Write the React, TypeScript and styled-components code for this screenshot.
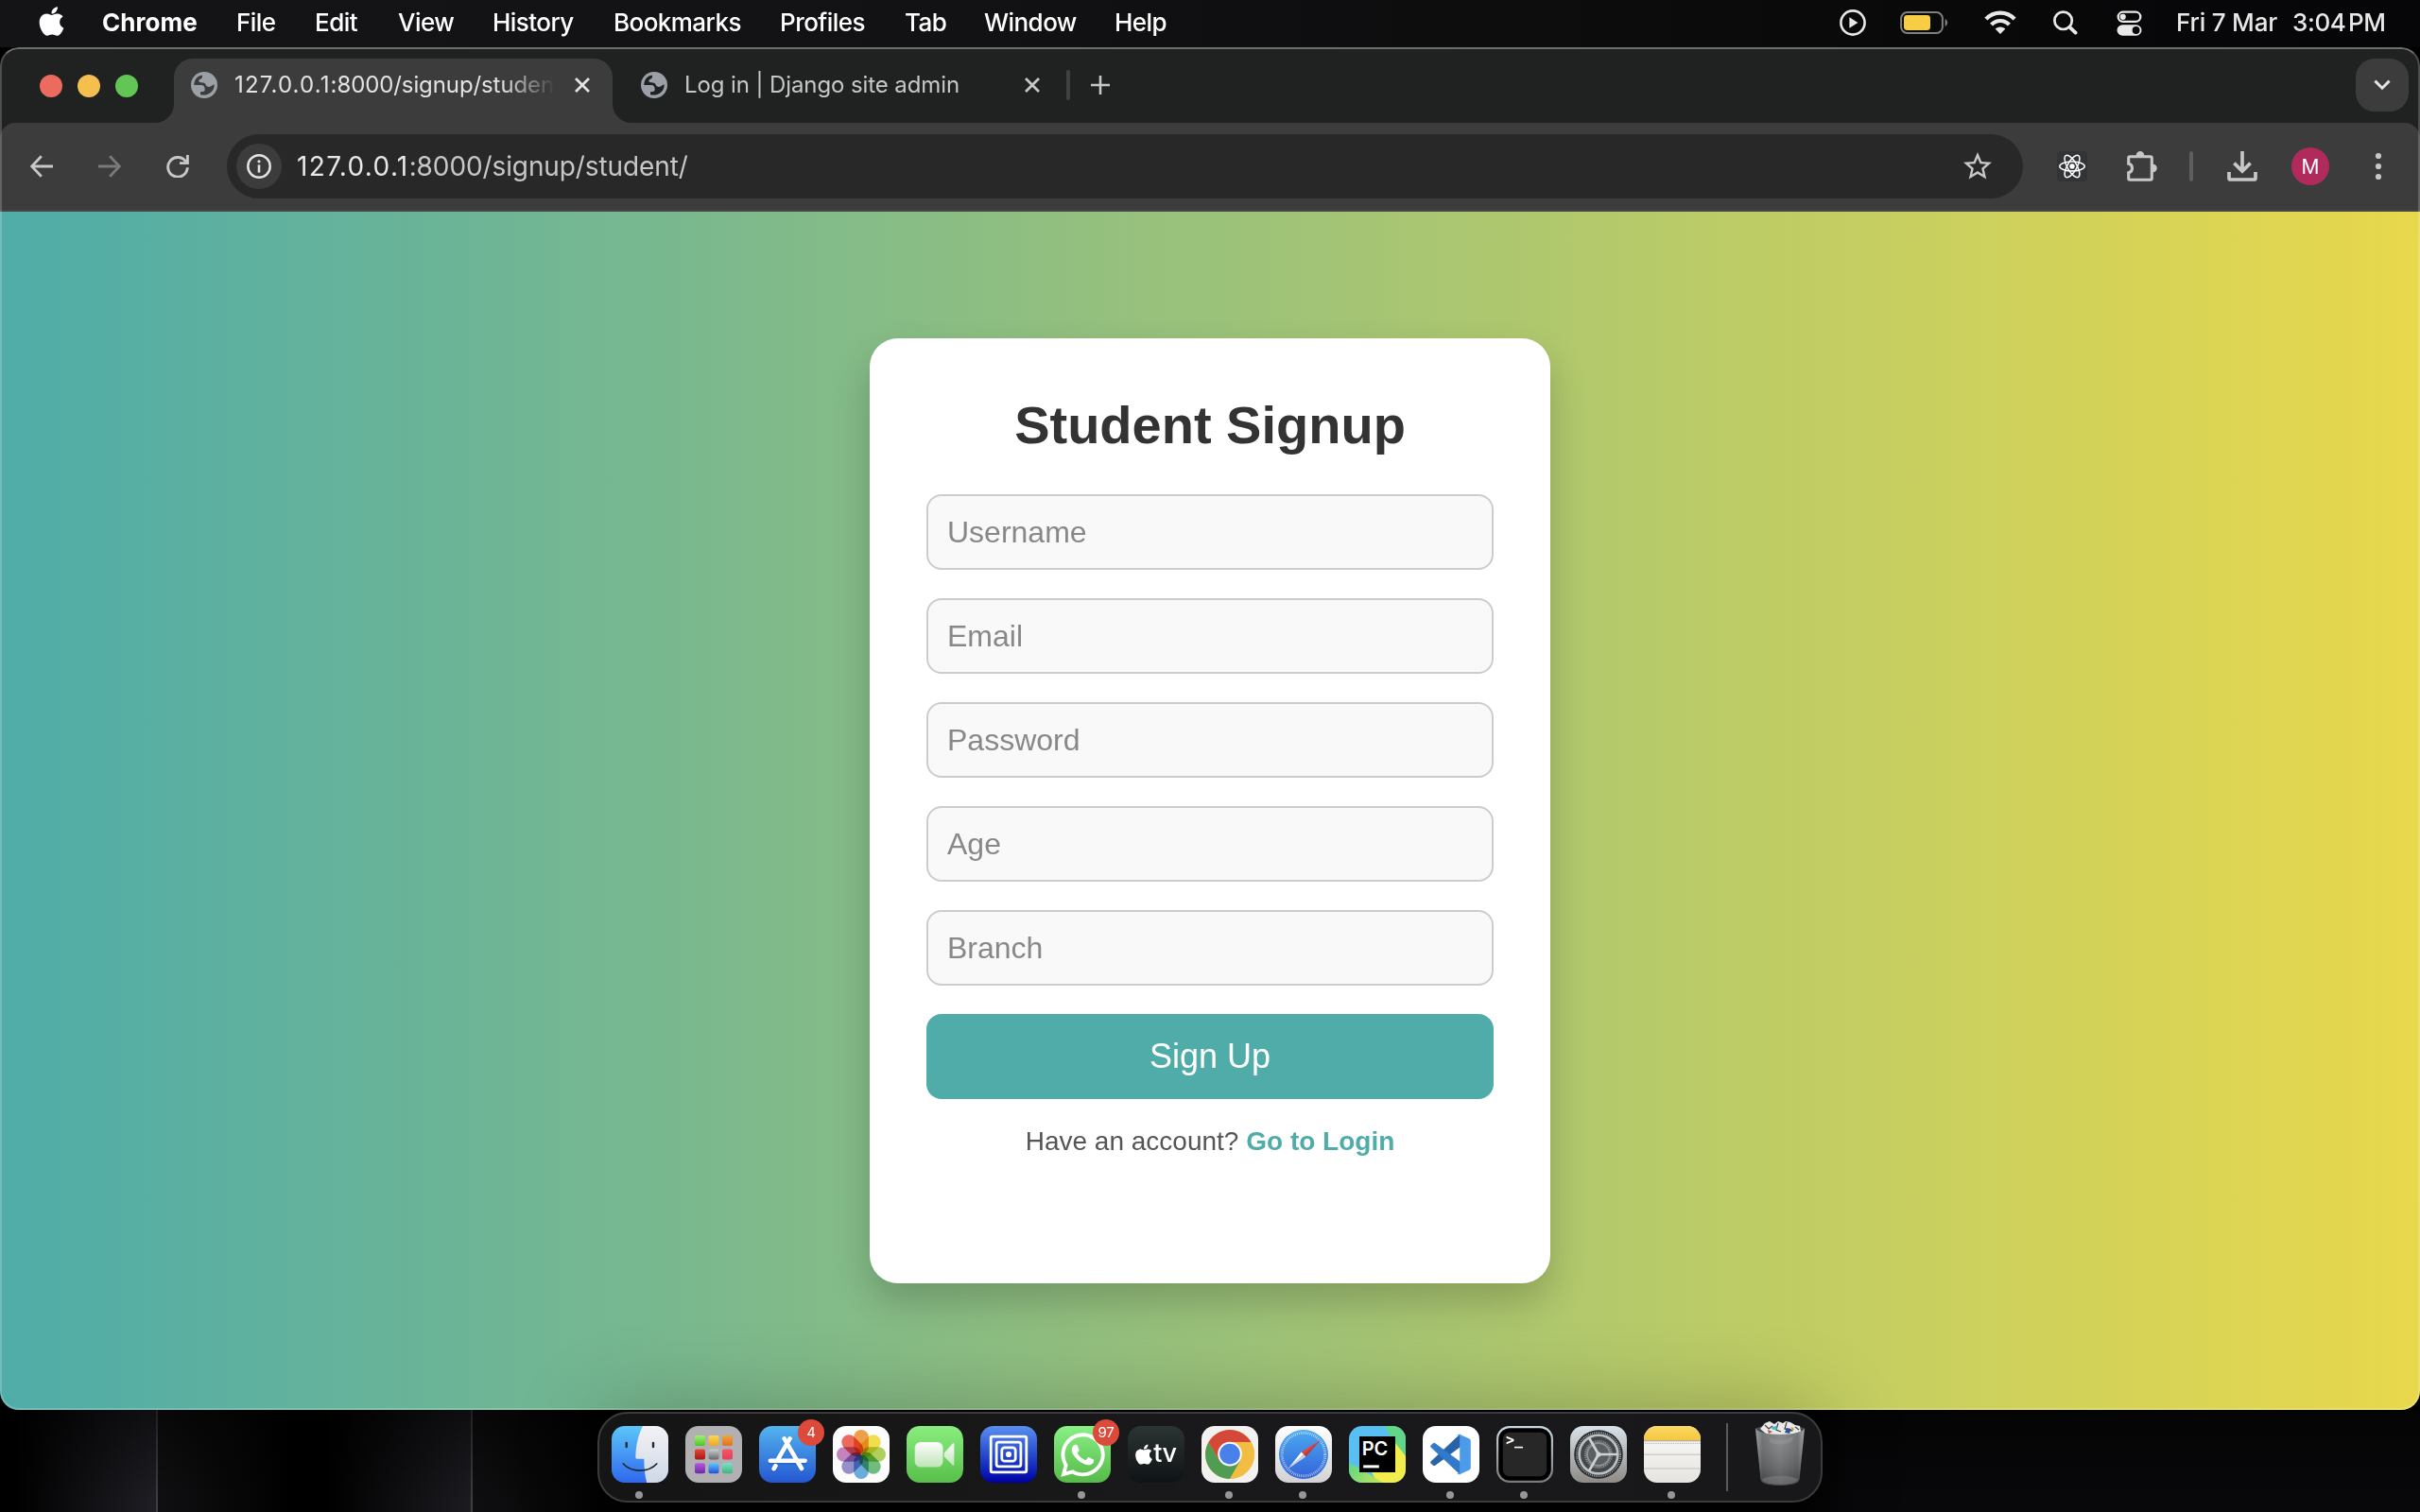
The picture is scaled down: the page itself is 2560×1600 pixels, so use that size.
import React from 'react';
import styled, { createGlobalStyle, css } from 'styled-components';
import { FaApple, FaWhatsapp } from 'react-icons/fa';
import { MdStarBorder } from 'react-icons/md';

const UI_FONT = "Inter, 'Noto Sans', sans-serif";
const PAGE_FONT = "'Liberation Sans', Arial, sans-serif";

const GlobalStyle = createGlobalStyle`
  html, body { margin: 0; padding: 0; background: #000; overflow: hidden; }
  *, *::before, *::after { box-sizing: border-box; }
  svg { display: block; flex: none; }
`;

const Desktop = styled.div`
  width: 2560px;
  height: 1600px;
  display: flex;
  flex-direction: column;
  background: #000;
  font-family: ${UI_FONT};
  overflow: hidden;
`;

/* ---------- menu bar ---------- */

const MenuBar = styled.header`
  height: 50px;
  padding: 0 39px 2px 37px;
  display: flex;
  align-items: center;
  color: #fff;
  background: linear-gradient(90deg, #141417 0, #121214 1000px, #0a0a0b 1900px, #060608 100%);
`;

const MenuLogo = styled.span`
  display: flex;
  width: 71px;
  padding-bottom: 3px;
  color: #fff;
`;

const MenuItem = styled.span<{ $w: number; $bold?: boolean }>`
  width: ${(p) => p.$w}px;
  padding-bottom: 1px;
  font-size: 26px;
  line-height: 46px;
  font-weight: ${(p) => (p.$bold ? 700 : 500)};
  letter-spacing: ${(p) => (p.$bold ? '0.05px' : '-0.55px')};
  white-space: nowrap;
`;

const StatusArea = styled.div`
  margin-left: auto;
  display: flex;
  align-items: center;
  color: #e8e8e8;
`;

const StatusSlot = styled.span<{ $gap: number }>`
  display: flex;
  margin-right: ${(p) => p.$gap}px;
`;

const Clock = styled.span<{ $w: number; $tight?: boolean }>`
  width: ${(p) => p.$w}px;
  padding-bottom: 1px;
  font-size: 26px;
  line-height: 46px;
  font-weight: 500;
  letter-spacing: ${(p) => (p.$tight ? '-0.4px' : '-0.2px')};
  word-spacing: ${(p) => (p.$tight ? '-4px' : '0')};
  white-space: nowrap;
`;

/* ---------- browser window ---------- */

const Window = styled.section`
  position: relative;
  height: 1442px;
  display: flex;
  flex-direction: column;
  border-radius: 20px;
  overflow: hidden;
  background: #202221;
  &::after {
    content: '';
    position: absolute;
    inset: 0;
    border: 2px solid rgba(255, 255, 255, 0.2);
    border-top-color: rgba(255, 255, 255, 0.34);
    border-radius: 20px;
    pointer-events: none;
  }
`;

const TabStrip = styled.div`
  height: 80px;
  padding: 12px 12px 0 42px;
  display: flex;
`;

const Lights = styled.div`
  display: flex;
  gap: 16px;
  width: 142px;
  padding-top: 17px;
`;

const Light = styled.span<{ $color: string }>`
  width: 24px;
  height: 24px;
  border-radius: 50%;
  background: ${(p) => p.$color};
`;

const flare = css`
  content: '';
  position: absolute;
  bottom: 0;
  width: 20px;
  height: 20px;
`;

const Tab = styled.div<{ $active?: boolean; $w: number }>`
  position: relative;
  width: ${(p) => p.$w}px;
  height: 68px;
  padding: 0 ${(p) => (p.$active ? 24 : 8)}px 12px ${(p) => (p.$active ? 18 : 30)}px;
  display: flex;
  align-items: center;
  color: ${(p) => (p.$active ? '#e3e3e3' : '#c7c7c7')};
  ${(p) =>
    p.$active &&
    css`
      background: #3c3c3c;
      border-radius: 20px 20px 0 0;
      &::before {
        ${flare}
        left: -20px;
        background: radial-gradient(circle at 0 0, transparent 19.5px, #3c3c3c 20.5px);
      }
      &::after {
        ${flare}
        right: -20px;
        background: radial-gradient(circle at 100% 0, transparent 19.5px, #3c3c3c 20.5px);
      }
    `}
`;

const TabTitle = styled.span<{ $w: number; $fade?: boolean }>`
  width: ${(p) => p.$w}px;
  margin-left: 18px;
  font-size: 24px;
  line-height: 40px;
  letter-spacing: -0.1px;
  white-space: nowrap;
  overflow: hidden;
  b {
    font-weight: 400;
    letter-spacing: 1.15px;
  }
  ${(p) =>
    p.$fade &&
    css`
      mask-image: linear-gradient(90deg, #000 282px, transparent 340px);
    `}
`;

const TabClose = styled.span`
  display: flex;
  margin-left: auto;
`;

const TabDivider = styled.span`
  width: 4px;
  height: 32px;
  margin: 12px 22px 0 20px;
  border-radius: 2px;
  background: #3f4140;
`;

const NewTab = styled.span`
  display: flex;
  padding-top: 18px;
`;

const TabSearch = styled.span`
  margin-left: auto;
  width: 56px;
  height: 56px;
  border-radius: 20px;
  background: #3c3c3c;
  color: #e3e3e3;
  display: flex;
  align-items: center;
  justify-content: center;
`;

const Toolbar = styled.div`
  height: 94px;
  padding: 0 36px 0 32px;
  display: flex;
  align-items: center;
  background: #3c3c3c;
  border-bottom: 2px solid #474747;
  border-radius: 16px 16px 0 0;
  color: #c7c7c7;
`;

const NavButton = styled.span<{ $gap: number; $dim?: boolean }>`
  display: flex;
  margin-right: ${(p) => p.$gap}px;
  color: ${(p) => (p.$dim ? '#7a7a7a' : '#c7c7c7')};
`;

const Omnibox = styled.div`
  width: 1900px;
  height: 68px;
  padding: 0 30px 0 10px;
  display: flex;
  align-items: center;
  border-radius: 34px;
  background: #282828;
`;

const SiteInfo = styled.span`
  width: 48px;
  height: 48px;
  border-radius: 50%;
  background: #3c3c3c;
  color: #e3e3e3;
  display: flex;
  align-items: center;
  justify-content: center;
`;

const Url = styled.span`
  margin-left: 16px;
  font-size: 28px;
  line-height: 40px;
  letter-spacing: -0.1px;
  color: #c7c7c7;
  white-space: nowrap;
  b {
    font-weight: 400;
    letter-spacing: 1.35px;
    color: #e8e8e8;
  }
`;

const StarSlot = styled.span`
  display: flex;
  margin-left: auto;
`;

const ToolSlot = styled.span<{ $left: number }>`
  display: flex;
  margin-left: ${(p) => p.$left}px;
`;

const ReactBox = styled.span`
  margin-left: 36px;
  width: 32px;
  height: 32px;
  border-radius: 4px;
  background: #333435;
  display: flex;
  align-items: center;
  justify-content: center;
`;

const ToolDivider = styled.span`
  width: 4px;
  height: 32px;
  margin-left: 34px;
  border-radius: 2px;
  background: #5e5e5e;
`;

const Avatar = styled.span`
  width: 40px;
  height: 40px;
  margin-left: 36px;
  border-radius: 50%;
  background: #b02b5c;
  color: #fff;
  font-size: 21px;
  line-height: 41px;
  text-align: center;
`;

/* ---------- signup page ---------- */

const Page = styled.main`
  flex: 1;
  display: flex;
  align-items: center;
  justify-content: center;
  background: linear-gradient(90deg, #4faca8 0%, #9bc27a 50%, #e8d84c 100%);
  font-family: ${PAGE_FONT};
`;

const Card = styled.form`
  width: 720px;
  height: 1000px;
  padding: 59px 60px 60px;
  display: flex;
  flex-direction: column;
  border-radius: 30px;
  background: #fff;
  box-shadow: 0 20px 40px rgba(0, 0, 0, 0.2);
`;

const Title = styled.h2`
  margin: 0 0 41px;
  height: 65px;
  font-size: 56px;
  line-height: 65px;
  font-weight: 700;
  color: #333;
  text-align: center;
`;

const Field = styled.input`
  width: 600px;
  height: 80px;
  margin: 0 0 30px;
  padding: 0 20px;
  border: 2px solid #ccc;
  border-radius: 16px;
  background: #f9f9f9;
  font: 32px ${PAGE_FONT};
  outline: none;
  &::placeholder {
    color: #888;
    opacity: 1;
  }
`;

const Submit = styled.button`
  height: 90px;
  padding: 0;
  border: 0;
  border-radius: 16px;
  background: #4faca8;
  color: #fff;
  font: 36px ${PAGE_FONT};
`;

const LoginHint = styled.p`
  margin: 29px 0 0;
  font-size: 28px;
  line-height: 32px;
  color: #555;
  text-align: center;
  b {
    color: #4faca8;
  }
`;

/* ---------- dock ---------- */

const DockArea = styled.footer`
  height: 108px;
  padding-top: 2px;
  display: flex;
  justify-content: center;
  align-items: flex-start;
  background:
    linear-gradient(180deg, rgba(0, 0, 0, 0.5), transparent 90%),
    linear-gradient(90deg, #000 15px, #1f1e24 165px, #3e3d43 165px, #3e3d43 167px, #101012 167px, #000 310px, #000 345px, #1c1b20 498px, #3e3d43 498px, #3e3d43 500px, #0f0f11 500px, #020202 640px, #020202 1900px, #08080a 1960px, #08080a 100%);
`;

const Dock = styled.nav`
  position: relative;
  width: 1296px;
  height: 96px;
  padding: 13px 13px 0;
  display: flex;
  gap: 18px;
  border: 2px solid #3b3b3d;
  border-radius: 32px;
  background: linear-gradient(90deg, #151515, #19191b 50%, #18181a);
  box-shadow: 0 0 90px rgba(0, 0, 0, 0.26);
`;

const DockItem = styled.div`
  position: relative;
  width: 60px;
  display: flex;
  flex-direction: column;
  align-items: center;
`;

const Tile = styled.div<{ $bg: string }>`
  width: 60px;
  height: 60px;
  border-radius: 14px;
  overflow: hidden;
  background: ${(p) => p.$bg};
`;

const RunningDot = styled.span`
  width: 8px;
  height: 8px;
  margin: 9px 2px 0 0;
  border-radius: 50%;
  background: #96969a;
`;

const Badge = styled.span`
  position: absolute;
  left: 41px;
  top: -7px;
  width: 28px;
  height: 28px;
  border-radius: 50%;
  background: #db4a3a;
  color: #fff;
  font-size: 15px;
  line-height: 28px;
  letter-spacing: -0.3px;
  text-align: center;
`;

const DockDivider = styled.span`
  width: 2px;
  height: 72px;
  margin: -3px 7px 0 9px;
  background: #5a5a5c;
`;

/* ---------- small icons ---------- */

const Globe = ({ hole }: { hole: string }) => (
  <svg width="28" height="28" viewBox="0 0 28 28">
    <circle cx="14" cy="14" r="14" fill="#9aa0a6" />
    <path
      fill={hole}
      d="M3.3 14C3.3 8 7 4 12 3.4V5.2C12 8 8 7.3 8.3 9.8 8.6 11.8 12 11 14 11.8 16 12.6 15.5 15.6 18.5 15.9 21 16 22 14.2 24.7 13.2 25 20.5 18.5 26 10 24.3V21.2C12 21 14.7 21.5 14.7 18.5 14.7 15.5 13.5 14 11 14Z"
    />
  </svg>
);

const Cross = () => (
  <svg width="16" height="16" viewBox="0 0 16 16" stroke="currentColor" strokeWidth="2.8">
    <path d="M1 1 15 15M15 1 1 15" />
  </svg>
);

const PlayIcon = () => (
  <svg width="28" height="28" viewBox="0 0 28 28">
    <circle cx="14" cy="14" r="12.6" fill="none" stroke="currentColor" strokeWidth="2.6" />
    <path d="M10.4 8.3V19.7L19.4 14Z" fill="currentColor" />
  </svg>
);

const BatteryIcon = () => (
  <svg width="52" height="24" viewBox="0 0 52 24">
    <rect x="1.1" y="1.1" width="43.8" height="21.8" rx="6.5" fill="none" stroke="#7f7f80" strokeWidth="2" />
    <rect x="4" y="4" width="28" height="16" rx="3.4" fill="#f7cd46" />
    <path d="M47.6 8v8c3.4-1.4 3.4-6.6 0-8Z" fill="#7f7f80" />
  </svg>
);

const WifiIcon = () => (
  <svg width="34" height="26" viewBox="0 0 34 26">
    <g fill="none" stroke="currentColor" strokeWidth="4.2">
      <path d="M1.9 9.2A20.5 20.5 0 0 1 32.1 9.2" />
      <path d="M7.6 15.2A12.6 12.6 0 0 1 26.4 15.2" />
    </g>
    <path d="M17 25 11.6 19.6Q17 15.4 22.4 19.6Z" fill="currentColor" />
  </svg>
);

const SearchIcon = () => (
  <svg width="26" height="26" viewBox="0 0 26 26" fill="none" stroke="currentColor" strokeLinecap="round">
    <circle cx="10.6" cy="10.8" r="9.2" strokeWidth="2.7" />
    <path d="M17.5 17.8 23.6 23.6" strokeWidth="3.8" />
  </svg>
);

const ControlIcon = () => (
  <svg width="27" height="27" viewBox="0 0 27 27">
    <rect x="1.7" y="1.7" width="23.6" height="10.2" rx="5.1" fill="none" stroke="currentColor" strokeWidth="2.3" />
    <circle cx="6.7" cy="6.8" r="3.1" fill="currentColor" />
    <rect x="0.5" y="15.2" width="26" height="11.6" rx="5.8" fill="currentColor" />
    <circle cx="20.6" cy="21" r="3.9" fill="#08080a" />
  </svg>
);

const BackIcon = ({ flip }: { flip?: boolean }) => (
  <svg width="24" height="24" viewBox="0 0 24 24" fill="none" stroke="currentColor" strokeWidth="2.8">
    <path d={flip ? 'M0 12H22M12.2 1.2 22.4 12 12.2 22.8' : 'M24 12H2M11.8 1.2 1.6 12 11.8 22.8'} />
  </svg>
);

const ReloadIcon = () => (
  <svg width="24" height="24" viewBox="0 0 24 24" fill="none" stroke="currentColor" strokeWidth="2.9">
    <path d="M20.9 7.6A10.3 10.3 0 1 0 22.3 13.2" />
    <path d="M22.4 0V8.6H14" />
  </svg>
);

const InfoIcon = () => (
  <svg width="26" height="26" viewBox="0 0 26 26">
    <circle cx="13" cy="13" r="11.7" fill="none" stroke="currentColor" strokeWidth="2.5" />
    <circle cx="13" cy="7.8" r="1.6" fill="currentColor" />
    <rect x="11.7" y="11.4" width="2.6" height="8.2" fill="currentColor" />
  </svg>
);

const AtomIcon = () => (
  <svg width="28" height="28" viewBox="0 0 28 28" fill="none" stroke="#fff" strokeWidth="1.5">
    {[0, 60, 120].map((a) => (
      <ellipse key={a} cx="14" cy="14" rx="13.2" ry="5" transform={`rotate(${a} 14 14)`} />
    ))}
    <circle cx="14" cy="14" r="2.7" fill="#fff" stroke="none" />
  </svg>
);

const PuzzleIcon = () => (
  <svg width="32" height="32" viewBox="0 0 32 32">
    <path
      fill="none"
      stroke="currentColor"
      strokeWidth="3.1"
      d="M1.7 13.3V7.2Q1.7 5.7 3.2 5.7H24.8Q26.3 5.7 26.3 7.2V28.8Q26.3 30.3 24.8 30.3H3.2Q1.7 30.3 1.7 28.8V22.7A4.8 4.8 0 0 0 1.7 13.3Z"
    />
    <path fill="currentColor" d="M9.8 5V4.2a4.2 4.2 0 0 1 8.4 0V5ZM27 13.8h.6a4.2 4.2 0 0 1 0 8.4H27Z" />
  </svg>
);

const DownloadIcon = () => (
  <svg width="32" height="32" viewBox="0 0 32 32" fill="none" stroke="currentColor" strokeWidth="3.7">
    <path d="M16 0V21M7.4 12.6 16 21.2 24.6 12.6" />
    <path d="M2 22V28.5Q2 30 3.5 30H28.5Q30 30 30 28.5V22" />
  </svg>
);

const DotsIcon = () => (
  <svg width="8" height="30" viewBox="0 0 8 30" fill="currentColor">
    {[4, 15, 26].map((y) => (
      <circle key={y} cx="4" cy={y} r="3.1" />
    ))}
  </svg>
);

/* ---------- dock artwork ---------- */

const Art = ({ children }: { children: React.ReactNode }) => (
  <svg width="60" height="60" viewBox="0 0 60 60" overflow="visible">
    {children}
  </svg>
);

const Fade = ({ id, from, to }: { id: string; from: string; to: string }) => (
  <linearGradient id={id} x1="0" y1="0" x2="0" y2="1">
    <stop offset="0" stopColor={from} />
    <stop offset="1" stopColor={to} />
  </linearGradient>
);

const FinderArt = () => (
  <Art>
    <defs>
      <Fade id="finderRight" from="#f3f2f5" to="#ced8e6" />
    </defs>
    <path d="M33 0C28 10 25.5 21 25.3 33.2Q25.3 34.8 27 34.8H34.3C34.3 44 35 52 37.2 60H60V0Z" fill="url(#finderRight)" />
    <g stroke="#1f2a38" strokeLinecap="round" fill="none">
      <path d="M15.7 18V22M44 18V22" strokeWidth="2.4" />
      <path d="M12.3 40C21 49.4 39 49.4 47.7 40" strokeWidth="1.8" />
    </g>
  </Art>
);

const LAUNCH = [
  ['#9df26a', '#4fc42c'], ['#fbd84e', '#eda52c'], ['#f2a43c', '#de7226'],
  ['#e4483a', '#a61812'], ['#c9ccd0', '#66686b'], ['#f4546c', '#e54058'],
  ['#b25ae0', '#6e2aa6'], ['#5cc8fb', '#2350d8'], ['#7be0d0', '#45b474'],
];

const LaunchpadArt = () => (
  <Art>
    {LAUNCH.map(([a, b], i) => (
      <g key={i}>
        <defs>
          <Fade id={`launch${i}`} from={a} to={b} />
        </defs>
        <rect x={10 + (i % 3) * 14.5} y={10 + Math.floor(i / 3) * 14.6} width="11" height="11" rx="2" fill={`url(#launch${i})`} />
      </g>
    ))}
  </Art>
);

const AppStoreArt = () => (
  <Art>
    <g stroke="#1d4fb4" strokeOpacity="0.35" strokeWidth="5" strokeLinecap="round" transform="translate(0 1.4)">
      <path d="M26.6 13.6 45 45M11.8 36.8H48.6M32.6 13.6 19.6 36M17.2 42.4 15.6 45.2" />
    </g>
    <g stroke="#fff" strokeWidth="4.6" strokeLinecap="round">
      <path d="M32.6 13.4 19.6 36M17.4 42.2 15.7 45.2" />
      <path d="M11.8 36.8H48.6" />
      <path d="M26.6 13.4 45 45" />
    </g>
  </Art>
);

const PETALS = ['#f09433', '#f3dc35', '#a8cc47', '#5fb56c', '#56a3da', '#8783c6', '#bd76b4', '#ea564b'];

const PhotosArt = () => (
  <Art>
    {PETALS.map((c, i) => (
      <rect
        key={c}
        x="22.2"
        y="4"
        width="15.6"
        height="25.8"
        rx="7.8"
        fill={c}
        fillOpacity="0.88"
        transform={`rotate(${i * 45} 30 30)`}
        style={{ mixBlendMode: 'multiply' }}
      />
    ))}
  </Art>
);

const FaceTimeArt = () => (
  <Art>
    <defs>
      <Fade id="camera" from="#fdfefd" to="#bfe4b8" />
    </defs>
    <rect x="8.7" y="17" width="29.8" height="26.4" rx="6" fill="url(#camera)" />
    <path d="M39.8 28.6 48.8 18.6Q50.4 17.4 50.4 19.4V40.6Q50.4 42.6 48.8 41.4L39.8 32.4Z" fill="url(#camera)" />
  </Art>
);

const SquaresArt = () => (
  <Art>
    <g fill="none" stroke="#fff" strokeWidth="2.8">
      <rect x="11.2" y="11.2" width="37.6" height="37.6" rx="1.5" />
      <rect x="17.1" y="17.1" width="25.8" height="25.8" rx="2.4" />
      <rect x="22.8" y="22.8" width="14.4" height="14.4" rx="3" />
    </g>
    <circle cx="30" cy="30" r="3.1" fill="#fff" />
  </Art>
);

const GlyphCenter = styled.div`
  width: 60px;
  height: 60px;
  display: flex;
  align-items: center;
  justify-content: center;
  color: #fff;
`;

/* the apple glyph carries blank side margins, trimmed here so that the word sits close to it */
const TvMark = styled(GlyphCenter)`
  font-size: 27px;
  line-height: 60px;
  font-weight: 500;
  letter-spacing: -0.4px;
  svg {
    margin: 0 -2px 0 -3px;
  }
  span {
    margin-top: -2px;
  }
`;

const ChromeArt = () => (
  <Art>
    <circle cx="30" cy="30" r="26" fill="#f2bd42" />
    {[['#4f9c52', 240], ['#f2bd42', 120], ['#d4483a', 0]].map(([c, a]) => (
      <path key={c} fill={c as string} transform={`rotate(${a} 30 30)`} d="M52.5 17A26 26 0 0 0 7.5 17L18.7 36.5 30 30V17Z" />
    ))}
    <circle cx="30" cy="29.6" r="12.8" fill="#fff" />
    <circle cx="30" cy="29.6" r="10.8" fill="#4a80ea" />
  </Art>
);

const SafariArt = () => (
  <Art>
    <defs>
      <Fade id="dial" from="#4aaaf0" to="#3462d9" />
    </defs>
    <circle cx="30" cy="30" r="26" fill="url(#dial)" />
    <circle cx="30" cy="30" r="22.8" fill="none" stroke="#fff" strokeOpacity="0.65" strokeWidth="3" strokeDasharray="0.8 1.19" />
    <path d="M48.4 14.4 27.6 27.6 30 30Z" fill="#e8453c" />
    <path d="M48.4 14.4 32.4 32.4 30 30Z" fill="#c43a31" />
    <path d="M13.4 45.4 27.6 27.6 30 30Z" fill="#fff" />
    <path d="M13.4 45.4 32.4 32.4 30 30Z" fill="#c9d2dc" />
  </Art>
);

const PyCharmArt = () => (
  <Art>
    <defs>
      <linearGradient id="lime" x1="0" y1="0" x2="1" y2="0.4">
        <stop offset="0" stopColor="#5ed58c" />
        <stop offset="1" stopColor="#b4e458" />
      </linearGradient>
    </defs>
    <path d="M38 0H60V34L49 22Z" fill="#62d58b" />
    <path d="M49 18 60 32V60H30L24 49Z" fill="#f2ec4c" />
    <path d="M0 39 12 45 36 60H0Z" fill="url(#lime)" />
    <rect x="11" y="11" width="38" height="38" fill="#000" />
    <text x="13.8" y="30.8" fontFamily={UI_FONT} fontWeight="600" fontSize="20" letterSpacing="-0.3" fill="#fff">
      PC
    </text>
    <rect x="15.2" y="41.4" width="16.6" height="3" fill="#fff" />
  </Art>
);

const VsCodeArt = () => (
  <Art>
    <path d="M39.5 9V22L13 41.5Q12 42 11 41.4L8.8 39.2Q8 38.2 9 37.4Z" fill="#2763a9" stroke="#2763a9" strokeWidth="0.8" />
    <path d="M39.5 51V38L13 18.5Q12 18 11 18.6L8.8 20.8Q8 21.8 9 22.6Z" fill="#3279cb" stroke="#3279cb" strokeWidth="0.8" />
    <path d="M39.5 9 49.4 13.6Q50.8 14.4 50.8 16V44Q50.8 45.6 49.4 46.4L39.5 51Q37.6 51.6 36.2 50.2 38 50.6 39.2 49V11Q38 9.4 36.2 9.8 37.6 8.4 39.5 9Z" fill="#4b9be9" />
  </Art>
);

const TerminalArt = () => (
  <Art>
    <rect x="2.2" y="2.2" width="55.6" height="55.6" rx="12" fill="#000" />
    <rect x="6.8" y="6.8" width="46.4" height="46.4" rx="7" fill="#272727" />
    <text x="10" y="20.4" fontFamily="'DejaVu Sans Mono', monospace" fontWeight="700" fontSize="15" fill="#fff">
      &gt;_
    </text>
  </Art>
);

const SettingsArt = () => (
  <Art>
    <circle cx="30" cy="30" r="25.8" fill="#2b2c2e" />
    <circle cx="30" cy="30" r="23.2" fill="none" stroke="#a9afb3" strokeWidth="1.8" strokeDasharray="0.9 1.13" />
    <circle cx="30" cy="30" r="20.4" fill="#45484b" stroke="#b9bfc3" strokeWidth="2.8" />
    <circle cx="30" cy="30" r="14" fill="none" stroke="#8c9194" strokeWidth="2" strokeDasharray="1.2 1" />
    <circle cx="30" cy="30" r="12" fill="#5b5f62" stroke="#8c9194" strokeWidth="2" />
    {[0, 120, 240].map((a) => (
      <path key={a} d="M30 30H50" stroke="#cdd2d5" strokeWidth="2.7" transform={`rotate(${a} 30 30)`} />
    ))}
    <circle cx="30" cy="30" r="2.6" fill="#cdd2d5" />
  </Art>
);

const NotesArt = () => (
  <Art>
    <defs>
      <Fade id="notesTop" from="#fbd965" to="#f5c63c" />
    </defs>
    <rect width="60" height="15.4" fill="url(#notesTop)" />
    <rect y="15.2" width="60" height="1" fill="#a9a08c" />
    <path d="M1 18.4H60" stroke="#b9b8b4" strokeWidth="1.2" strokeDasharray="1.2 1.1" />
    <path d="M0 30.2H60M0 45H60" stroke="#cfcecb" strokeWidth="1.5" />
  </Art>
);

const TrashArt = () => (
  <Art>
    <defs>
      <linearGradient id="bin" x1="0" y1="0" x2="1" y2="0">
        <stop offset="0" stopColor="#8d9092" />
        <stop offset="0.14" stopColor="#5f6264" />
        <stop offset="0.5" stopColor="#7a7c7e" />
        <stop offset="0.86" stopColor="#5f6264" />
        <stop offset="1" stopColor="#94979a" />
      </linearGradient>
      <Fade id="binShade" from="#ffffff22" to="#00000055" />
    </defs>
    <path d="M4 2.4Q30 -7 56 2.4L54 8H6Z" fill="#46494b" />
    <path d="M9 3 14-3 19-5 24-2 28-5 33-3 36-5 41-4 46-1 51 0 52 6 42 9H16Z" fill="#e9e9e7" />
    <path d="M14-1 18 3 22 0M28-3 26 4 31 6M37-4 35 3 43 5M46 1 50 4" stroke="#4a4744" strokeWidth="1.3" fill="none" />
    <path d="M20 1.5 26 0 27 3.4 23 4Z" fill="#44b8c8" />
    <path d="M37 2 42 3 40 8 35 7Z" fill="#2f5196" />
    <path d="M17 4 22 6 18 8Z" fill="#b5552b" />
    <path d="M42 1 45 3 43 6Z" fill="#c98b3e" />
    <path d="M4 2.6Q8 8.8 30 9 52 8.8 56 2.6L50.4 57Q49 62.6 30 62.8 11 62.6 9.6 57Z" fill="url(#bin)" />
    <path d="M4 2.6Q8 8.8 30 9 52 8.8 56 2.6L50.4 57Q49 62.6 30 62.8 11 62.6 9.6 57Z" fill="url(#binShade)" />
    <path d="M10.6 57Q14 53 30 52.8 46 53 49.4 57 46 61.6 30 61.8 14 61.6 10.6 57Z" fill="#8f9294" fillOpacity="0.4" />
    <path d="M18 12Q30 18 44 11L42 17Q30 22 20 18Z" fill="#a4a7a9" fillOpacity="0.3" />
  </Art>
);

type AppEntry = { id: string; bg: string; art: React.ReactNode; running?: boolean; badge?: string };

const APPS: AppEntry[] = [
  { id: 'finder', bg: 'linear-gradient(#5cc6f9, #2f68ee)', art: <FinderArt />, running: true },
  { id: 'launchpad', bg: '#b1b1b4', art: <LaunchpadArt /> },
  { id: 'store', bg: 'linear-gradient(#54b4ee, #2457d2)', art: <AppStoreArt />, badge: '4' },
  { id: 'photos', bg: '#fcfcfc', art: <PhotosArt /> },
  { id: 'facetime', bg: 'linear-gradient(#89ee7f, #58bf4a)', art: <FaceTimeArt /> },
  { id: 'squares', bg: 'linear-gradient(#5a8ff0, #1c3cc8 60%, #0000a4)', art: <SquaresArt /> },
  {
    id: 'whatsapp',
    bg: 'linear-gradient(#89f085, #56ba49)',
    art: (
      <GlyphCenter>
        <FaWhatsapp size={53} />
      </GlyphCenter>
    ),
    running: true,
    badge: '97',
  },
  {
    id: 'tv',
    bg: 'linear-gradient(#2b3532, #0f1315)',
    art: (
      <TvMark>
        <FaApple size={24} />
        <span>tv</span>
      </TvMark>
    ),
  },
  { id: 'chrome', bg: '#f3f2f1', art: <ChromeArt />, running: true },
  { id: 'safari', bg: 'linear-gradient(#ffffff, #d2d2d4)', art: <SafariArt />, running: true },
  { id: 'pycharm', bg: '#57bff2', art: <PyCharmArt /> },
  { id: 'vscode', bg: '#ffffff', art: <VsCodeArt />, running: true },
  { id: 'terminal', bg: 'linear-gradient(#c9d9e2, #77787a)', art: <TerminalArt />, running: true },
  { id: 'settings', bg: 'linear-gradient(#d8e2e9, #8e8a87)', art: <SettingsArt /> },
  { id: 'notes', bg: 'linear-gradient(#fbfbfb, #e6e4df)', art: <NotesArt />, running: true },
];

const MENUS: [string, number][] = [
  ['File', 83], ['Edit', 88], ['View', 100], ['History', 128], ['Bookmarks', 176],
  ['Profiles', 132], ['Tab', 84], ['Window', 138], ['Help', 60],
];

const FIELDS = ['Username', 'Email', 'Password', 'Age', 'Branch'];

export default function App() {
  return (
    <Desktop>
      <GlobalStyle />
      <MenuBar>
        <MenuLogo>
          <FaApple size={35} />
        </MenuLogo>
        <MenuItem $w={142} $bold>
          Chrome
        </MenuItem>
        {MENUS.map(([label, w]) => (
          <MenuItem key={label} $w={w}>
            {label}
          </MenuItem>
        ))}
        <StatusArea>
          <StatusSlot $gap={36}>
            <PlayIcon />
          </StatusSlot>
          <StatusSlot $gap={37}>
            <BatteryIcon />
          </StatusSlot>
          <StatusSlot $gap={39}>
            <WifiIcon />
          </StatusSlot>
          <StatusSlot $gap={41}>
            <SearchIcon />
          </StatusSlot>
          <StatusSlot $gap={36}>
            <ControlIcon />
          </StatusSlot>
          <Clock $w={123}>Fri 7 Mar</Clock>
          <Clock $w={96} $tight>
            3:04 PM
          </Clock>
        </StatusArea>
      </MenuBar>

      <Window>
        <TabStrip>
          <Lights>
            <Light $color="#ed6a5f" />
            <Light $color="#f5bf4f" />
            <Light $color="#62c655" />
          </Lights>
          <Tab $active $w={464}>
            <Globe hole="#3c3c3c" />
            <TabTitle $w={338} $fade>
              <b>127.0.0.1</b>:8000/signup/student/
            </TabTitle>
            <TabClose>
              <Cross />
            </TabClose>
          </Tab>
          <Tab $w={460}>
            <Globe hole="#202221" />
            <TabTitle $w={320}>Log in | Django site admin</TabTitle>
            <TabClose>
              <Cross />
            </TabClose>
          </Tab>
          <TabDivider />
          <NewTab>
            <svg width="20" height="20" viewBox="0 0 20 20" stroke="#c7c7c7" strokeWidth="2.6">
              <path d="M10 0V20M0 10H20" />
            </svg>
          </NewTab>
          <TabSearch>
            <svg width="18" height="12" viewBox="0 0 18 12" fill="none" stroke="currentColor" strokeWidth="3">
              <path d="M1.4 1.6 9 9.2 16.6 1.6" />
            </svg>
          </TabSearch>
        </TabStrip>

        <Toolbar>
          <NavButton $gap={48}>
            <BackIcon />
          </NavButton>
          <NavButton $gap={48} $dim>
            <BackIcon flip />
          </NavButton>
          <NavButton $gap={40}>
            <ReloadIcon />
          </NavButton>
          <Omnibox>
            <SiteInfo>
              <InfoIcon />
            </SiteInfo>
            <Url>
              <b>127.0.0.1</b>:8000/signup/student/
            </Url>
            <StarSlot>
              <MdStarBorder size={36} />
            </StarSlot>
          </Omnibox>
          <ReactBox>
            <AtomIcon />
          </ReactBox>
          <ToolSlot $left={42}>
            <PuzzleIcon />
          </ToolSlot>
          <ToolDivider />
          <ToolSlot $left={36}>
            <DownloadIcon />
          </ToolSlot>
          <Avatar>M</Avatar>
          <ToolSlot $left={48}>
            <DotsIcon />
          </ToolSlot>
        </Toolbar>

        <Page>
          <Card>
            <Title>Student Signup</Title>
            {FIELDS.map((name) => (
              <Field key={name} placeholder={name} />
            ))}
            <Submit type="button">Sign Up</Submit>
            <LoginHint>
              Have an account? <b>Go to Login</b>
            </LoginHint>
          </Card>
        </Page>
      </Window>

      <DockArea>
        <Dock>
          {APPS.map((app) => (
            <DockItem key={app.id}>
              <Tile $bg={app.bg}>{app.art}</Tile>
              {app.running && <RunningDot />}
              {app.badge && <Badge>{app.badge}</Badge>}
            </DockItem>
          ))}
          <DockDivider />
          <DockItem>
            <TrashArt />
          </DockItem>
        </Dock>
      </DockArea>
    </Desktop>
  );
}
